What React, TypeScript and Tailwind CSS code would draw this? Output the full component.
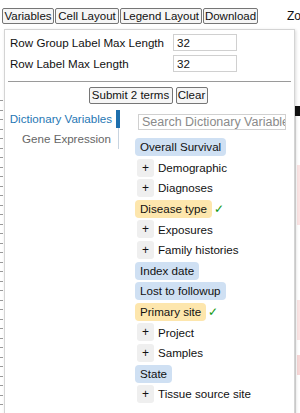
import React from "react";

type Item = { label: string; kind: "leaf" | "branch" | "selected" };

const items: Item[] = [
  { label: "Overall Survival", kind: "leaf" },
  { label: "Demographic", kind: "branch" },
  { label: "Diagnoses", kind: "branch" },
  { label: "Disease type", kind: "selected" },
  { label: "Exposures", kind: "branch" },
  { label: "Family histories", kind: "branch" },
  { label: "Index date", kind: "leaf" },
  { label: "Lost to followup", kind: "leaf" },
  { label: "Primary site", kind: "selected" },
  { label: "Project", kind: "branch" },
  { label: "Samples", kind: "branch" },
  { label: "State", kind: "leaf" },
  { label: "Tissue source site", kind: "branch" },
];

const ticks = Array.from({ length: 34 }, (_, i) => i);

const topBtn =
  "shrink-0 h-[16px] leading-[14px] border border-[#767676] rounded-[2px] bg-[#f6f6f6] text-[11.5px] text-center px-0 whitespace-nowrap";

export default function App() {
  return (
    <div className="relative w-[300px] h-[413px] overflow-hidden bg-white font-['Liberation_Sans',Arial,sans-serif] text-[11.6px] text-[#111]">
      {/* background decorations under the popup */}
      <div className="absolute left-0 top-[100px] flex flex-col gap-[8.5px]">
        {ticks.map((t) => (
          <div key={t} className="w-[3px] h-[1px] bg-[#999]" />
        ))}
      </div>
      <div className="absolute left-[295px] top-[106px] w-[5px] h-[10px] bg-[#111]" />
      <div className="absolute left-[295px] top-[116px] w-[1px] h-[300px] bg-[#ddd]" />
      <div className="absolute left-[297px] top-[165px] w-[3px] h-[60px] bg-[#fbe3e3]" />
      <div className="absolute left-[297px] top-[300px] w-[3px] h-[40px] bg-[#fbe3e3]" />
      <div className="absolute left-[297px] top-[355px] w-[3px] h-[20px] bg-[#f7d6d6]" />

      {/* top menu bar */}
      <div className="relative flex items-center pt-[7px] pl-[2px] gap-[1px] w-[340px]">
        <button className={`${topBtn} w-[52px]`}>Variables</button>
        <button className={`${topBtn} w-[64px]`}>Cell Layout</button>
        <button className={`${topBtn} w-[82px]`}>Legend Layout</button>
        <button className={`${topBtn} w-[55px]`}>Download</button>
        <span className="shrink-0 ml-[28px] text-[12px] whitespace-nowrap">Zoom</span>
      </div>

      {/* popup panel */}
      <div className="relative ml-[4px] mt-[4px] w-[291px] h-[400px] bg-white border border-[#d4d4d4] shadow-[1px_1px_3px_rgba(0,0,0,0.15)]">
        <div className="pt-[2px] pl-[5px]">
          <div className="flex items-center h-[21px]">
            <span className="w-[163px] whitespace-nowrap">Row Group Label Max Length</span>
            <div className="w-[64px] h-[17px] border border-[#d0d0d0] pl-[3px] leading-[15px]">32</div>
          </div>
          <div className="flex items-center h-[21px]">
            <span className="w-[163px] whitespace-nowrap">Row Label Max Length</span>
            <div className="w-[64px] h-[17px] border border-[#d0d0d0] pl-[3px] leading-[15px]">32</div>
          </div>
        </div>
        <div className="mt-[7px] ml-[3px] mr-[3px] h-[1px] bg-[#9a9a9a]" />
        <div className="mt-[5px] flex justify-center gap-[3px] pr-[3px]">
          <button className="w-[84px] h-[17px] leading-[15px] border border-[#767676] rounded-[2px] bg-[#f6f6f6] text-[11.5px] px-0 whitespace-nowrap">
            Submit 2 terms
          </button>
          <button className="w-[32px] h-[17px] leading-[15px] border border-[#767676] rounded-[2px] bg-[#f6f6f6] text-[11.5px] px-0 whitespace-nowrap">
            Clear
          </button>
        </div>

        <div className="mt-[6px] flex">
          {/* tabs */}
          <div className="w-[115px] flex flex-col">
            <div className="h-[18px] flex items-center justify-end pr-[4px] border-r-[4px] border-[#1d6fad] text-[#1f77b4] whitespace-nowrap">
              Dictionary Variables
            </div>
            <div className="h-[21px] flex items-center justify-end pr-[7px] mr-[1px] border-r border-[#c8d4e0] text-[#666] whitespace-nowrap">
              Gene Expression
            </div>
          </div>

          {/* content */}
          <div className="pl-[15px] flex flex-col">
            <div className="ml-[3px] mt-[4px] w-[148px] h-[16px] border border-[#d0d0d0] pl-[3px] leading-[14px] text-[12.5px] text-[#8a8a8a] whitespace-nowrap overflow-hidden">
              Search Dictionary Variables
            </div>
            <div className="mt-[8px] flex flex-col gap-[2.6px]">
              {items.map((it) => (
                <div key={it.label} className="flex items-center h-[18px] whitespace-nowrap">
                  {it.kind === "branch" ? (
                    <>
                      <span className="ml-[2px] w-[17px] h-[18px] rounded-[3px] bg-[#efefef] flex items-center justify-center text-[12px]">
                        +
                      </span>
                      <span className="ml-[4px]">{it.label}</span>
                    </>
                  ) : it.kind === "selected" ? (
                    <>
                      <span className="h-[18px] px-[5px] rounded-[4px] bg-[#fde6ad] flex items-center">
                        {it.label}
                      </span>
                      <span className="ml-[2px] text-[#139a13] text-[12px]">✓</span>
                    </>
                  ) : (
                    <span className="h-[18px] px-[5px] rounded-[4px] bg-[#cfe0f3] flex items-center">
                      {it.label}
                    </span>
                  )}
                </div>
              ))}
            </div>
          </div>
        </div>
      </div>
    </div>
  );
}
